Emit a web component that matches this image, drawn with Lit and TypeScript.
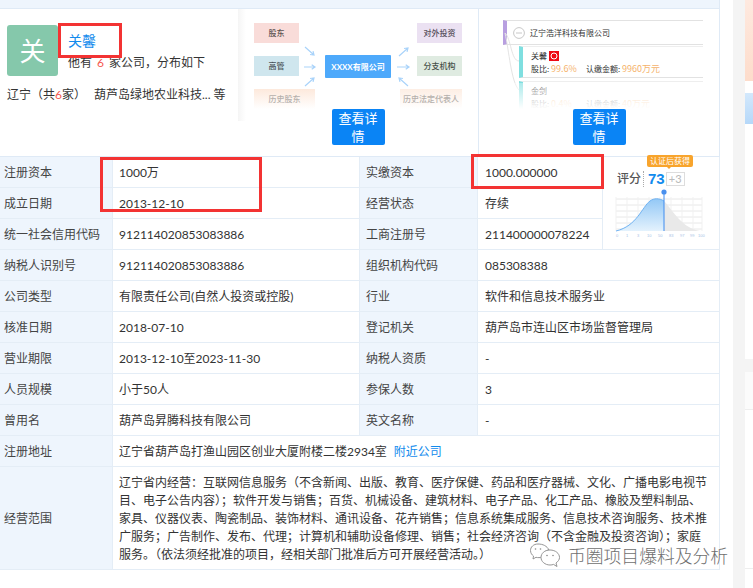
import { LitElement, html, css, svg } from 'lit'
import { customElement } from 'lit/decorators.js'

// diagram nodes are placed from this data, in px inside the 240x100 thumbnail
const nodes = [
	{ label: '股东', x: 16, y: 14, w: 45, h: 20, bg: '#f9dcd9', color: '#5b5250' },
	{ label: '高管', x: 16, y: 47, w: 45, h: 20, bg: '#cfe6ee', color: '#4a5358' },
	{ label: '历史股东', x: 16, y: 80, w: 61, h: 20, bg: 'linear-gradient(#fde9dc, #fff)', color: '#b5b0ac' },
	{ label: 'XXXX有限公司', x: 87, y: 46, w: 66, h: 23, bg: '#4da9fb', color: '#fff' },
	{ label: '对外投资', x: 179, y: 14, w: 45, h: 20, bg: '#ebe1f2', color: '#57505c' },
	{ label: '分支机构', x: 179, y: 47, w: 45, h: 20, bg: '#dfebe1', color: '#465048' },
	{ label: '历史法定代表人', x: 162, y: 80, w: 62, h: 20, bg: 'linear-gradient(#fdeee4, #fff)', color: '#b5b0ac' },
]

// page coordinates, the svg viewBox starts at the thumbnail corner
const arrows = [
	[305, 46, 314, 54],
	[304, 66, 315, 66],
	[305, 85, 314, 77],
	[399, 55, 408, 47],
	[397, 66, 409, 66],
	[408, 85, 399, 77],
]

const rows = [
	['注册资本', '1000万', '实缴资本', '1000.000000'],
	['成立日期', '2013-12-10', '经营状态', '存续'],
	['统一社会信用代码', '912114020853083886', '工商注册号', '211400000078224'],
	['纳税人识别号', '912114020853083886', '组织机构代码', '085308388'],
	['公司类型', '有限责任公司(自然人投资或控股)', '行业', '软件和信息技术服务业'],
	['核准日期', '2018-07-10', '登记机关', '葫芦岛市连山区市场监督管理局'],
	['营业期限', '2013-12-10至2023-11-30', '纳税人资质', '-'],
	['人员规模', '小于50人', '参保人数', '3'],
	['曾用名', '葫芦岛昇腾科技有限公司', '英文名称', '-'],
]

const scope = [
	'辽宁省内经营：互联网信息服务（不含新闻、出版、教育、医疗保健、药品和医疗器械、文化、广播电影电视节',
	'目、电子公告内容）；软件开发与销售；百货、机械设备、建筑材料、电子产品、化工产品、橡胶及塑料制品、',
	'家具、仪器仪表、陶瓷制品、装饰材料、通讯设备、花卉销售；信息系统集成服务、信息技术咨询服务、技术推',
	'广服务；广告制作、发布、代理；计算机和辅助设备修理、销售；社会经济咨询（不含金融及投资咨询）；家庭',
	'服务。（依法须经批准的项目，经相关部门批准后方可开展经营活动。）',
]

@customElement('app-root')
export class AppRoot extends LitElement {
	static styles = css`
		:host {
			display: flex;
			width: 753px;
			height: 588px;
			overflow: hidden;
			position: relative;
			background: #fff;
			color: #333;
			font-family: Lato, 'Noto Sans CJK SC', sans-serif;
			font-size: 12px;
			line-height: 18px;
		}

		.main {
			width: 720px;
			flex: none;
		}

		.band {
			height: 8px;
			background: #eef5fd;
			border-bottom: 1px solid #dfeaf6;
			border-right: 1px solid #dfeaf6;
		}

		.cards {
			display: flex;
			height: 147px;
			border-right: 1px solid #dfeaf6;
		}

		.card {
			display: flex;
			flex-direction: column;
			align-items: center;
			box-sizing: border-box;
		}

		.person {
			width: 238px;
			align-items: stretch;
			padding: 16px 0 0 7px;
			height: 112px;
		}

		.person-head {
			display: flex;
			gap: 10px;
		}

		.avatar {
			width: 51px;
			height: 51px;
			border-radius: 3px;
			background: #85c8ab;
			color: #fff;
			font-size: 26px;
			display: flex;
			align-items: center;
			justify-content: center;
		}

		.person-text {
			padding-top: 6px;
		}

		.name {
			color: #128bed;
			font-size: 14px;
			line-height: 20px;
			margin-bottom: 3px;
		}

		.red {
			color: #f5584f;
		}

		.spaced {
			margin: 0 2px;
		}

		.person-foot {
			margin-top: 10px;
			display: flex;
			gap: 8px;
			white-space: nowrap;
		}

		.graph {
			width: 240px;
			background: linear-gradient(90deg, #f5f5f5, #fff 8px) no-repeat 0 0 / 100% 112px;
		}

		.graph-box {
			position: relative;
			width: 240px;
			height: 100px;
			flex: none;
		}

		.graph-box svg {
			position: absolute;
			inset: 0;
		}

		.node {
			position: absolute;
			display: flex;
			align-items: center;
			justify-content: center;
			font-size: 8px;
			font-weight: 500;
			line-height: 10px;
			white-space: nowrap;
		}

		.hub {
			border-radius: 1px;
			font-weight: 700;
		}

		.btn {
			width: 53px;
			height: 36px;
			flex: none;
			box-sizing: border-box;
			padding: 0 6px;
			background: #0a84f5;
			border-radius: 2px;
			color: #fff;
			font-size: 13px;
			line-height: 18px;
			text-align: center;
		}

		.tree-card {
			width: 241px;
			border-left: 1px solid #dfeaf6;
			padding-top: 11px;
		}

		.tree {
			position: relative;
			width: 200px;
			height: 89px;
			flex: none;
			overflow: hidden;
			margin-left: 24px;
			align-self: flex-start;
			font-size: 8px;
			line-height: 13px;
			color: #333;
			font-family: 'Noto Sans CJK SC', sans-serif;
		}

		.tree-head {
			display: flex;
			align-items: center;
			gap: 5px;
			height: 25px;
			box-sizing: border-box;
			border-left: 4px solid #b89fe0;
			border-top: 1px solid #e2e2e2;
			border-bottom: 1px solid #e2e2e2;
			padding-left: 6px;
		}

		.minus {
			width: 12px;
			height: 12px;
			flex: none;
		}

		.tree-row {
			margin: 1px 0 3px 16px;
			height: 32px;
			box-sizing: border-box;
			border-left: 4px solid #7fdfe0;
			border-top: 1px solid #eee;
			border-bottom: 1px solid #e2e2e2;
			padding: 2px 0 0 8px;
		}

		.tree-line {
			display: flex;
			align-items: center;
			gap: 2px;
		}

		.stat {
			display: grid;
			grid-template-columns: 55px auto;
			justify-content: start;
		}

		.orange {
			color: #f5b36b;
			font-size: 9px;
		}

		.tree-curves {
			position: absolute;
			inset: 0;
		}

		.tree-fade {
			position: absolute;
			left: 0;
			right: 0;
			bottom: 0;
			height: 26px;
			background: linear-gradient(rgba(255, 255, 255, 0.35), #fff);
		}

		.table {
			display: grid;
			grid-template-columns: 113px 247px 118px 125px 117px;
			grid-auto-rows: 31px;
			border-top: 1px solid #dfeaf6;
		}

		.cell {
			display: flex;
			align-items: center;
			box-sizing: border-box;
			border-right: 1px solid #e4edf6;
			border-bottom: 1px solid #e4edf6;
			white-space: nowrap;
		}

		.label {
			background: #eef5fd;
			padding: 1px 0 0 4px;
			color: #444;
		}

		.label.second {
			padding-left: 6px;
		}

		.value {
			padding: 1px 0 0 6px;
		}

		.value.second {
			padding-left: 7px;
		}

		.wide2 {
			grid-column: span 2;
		}

		.wide4 {
			grid-column: span 4;
		}

		.tall {
			height: 103px;
		}

		.nearby {
			color: #128bed;
			margin-left: 7px;
		}

		.score {
			grid-column: 5;
			grid-row: 1 / span 3;
			position: relative;
			display: block;
			padding: 13px 0 0 14px;
		}

		.score-top {
			display: flex;
			align-items: center;
			height: 18px;
			color: #555;
			font-weight: 500;
		}

		.score-sep {
			height: 16px;
			margin: 0 4px 0 2px;
			border-left: 1px dotted #aaa;
		}

		.score-num {
			color: #128bed;
			font-size: 15px;
			font-weight: 700;
			font-family: 'Liberation Sans', sans-serif;
		}

		.score-plus {
			margin-left: 1px;
			width: 17px;
			height: 12px;
			line-height: 12px;
			text-align: center;
			border: 1px solid #ddd;
			color: #bbb;
			font-size: 11px;
		}

		.score-chart {
			display: block;
			margin: -1px 0 0 -7px;
		}

		.tag {
			position: absolute;
			left: 44px;
			top: -2px;
			width: 46px;
			height: 12px;
			background: #f8a42c;
			border-radius: 2px;
			color: #fff;
			font-size: 8px;
			line-height: 12px;
			text-align: center;
			white-space: nowrap;
		}

		.tag::after {
			content: '';
			position: absolute;
			left: 20px;
			bottom: -2px;
			border: 2px solid transparent;
			border-bottom: 0;
			border-top-color: #f8a42c;
		}

		.gutter {
			width: 33px;
			flex: none;
			display: flex;
			padding-left: 13px;
			box-sizing: border-box;
		}

		.track {
			width: 12px;
			flex: none;
			background: #f4f4f4;
		}

		.side {
			flex: 1;
			display: flex;
			flex-direction: column;
		}

		.side-salmon {
			height: 81px;
			background: linear-gradient(#fee9df, #fddccb);
		}

		.side-blue {
			height: 31px;
			margin-top: 12px;
			background: linear-gradient(#d3e8fc, #b5d8f9);
		}

		.side-gap {
			height: 235px;
			flex: none;
		}

		.side-gray {
			height: 13px;
			background: #f4f4f4;
		}

		.side-pale {
			height: 37px;
			background: #fbfbfb;
			border-bottom: 1px solid #eee;
		}

		.side-rest {
			height: 158px;
			border-bottom: 1px solid #eee;
		}

		.mark {
			position: absolute;
			border: 3px solid #f33333;
			box-sizing: border-box;
			pointer-events: none;
		}

		.mark-name {
			left: 58px;
			top: 23px;
			width: 64px;
			height: 35px;
		}

		.mark-capital {
			left: 100px;
			top: 157px;
			width: 162px;
			height: 55px;
		}

		.mark-paid {
			left: 471px;
			top: 154px;
			width: 133px;
			height: 35px;
		}

		.watermark {
			position: absolute;
			left: 530px;
			top: 542px;
			display: flex;
			align-items: center;
			gap: 8px;
			color: #6f6f6f;
			font-size: 17.8px;
			line-height: 26px;
			font-weight: 300;
			white-space: nowrap;
			text-shadow: 0 0 2px #fff, 0 0 2px #fff;
			font-family: 'Noto Sans CJK SC', sans-serif;
		}
	`

	renderGraph() {
		return html`
			<div class="graph-box">
				<svg width="240" height="100" viewBox="238 8 240 100" fill="none" stroke="#a9d3fa" stroke-width="1.2">
					${arrows.map(([x1, y1, x2, y2]) => {
						const a = Math.atan2(y2 - y1, x2 - x1)
						const p1 = `${x2 - 4 * Math.cos(a - 0.6)} ${y2 - 4 * Math.sin(a - 0.6)}`
						const p2 = `${x2 - 4 * Math.cos(a + 0.6)} ${y2 - 4 * Math.sin(a + 0.6)}`
						return svg`<path d="M${x1} ${y1}L${x2} ${y2}M${p1}L${x2} ${y2}L${p2}" />`
					})}
				</svg>
				${nodes.map(
					(n) => html`<div
						class="node ${n.label.startsWith('XXXX') ? 'hub' : ''}"
						style="left:${n.x}px;top:${n.y}px;width:${n.w}px;height:${n.h}px;background:${n.bg};color:${n.color}"
					>
						${n.label}
					</div>`
				)}
			</div>
		`
	}

	renderTree() {
		return html`
			<div class="tree">
				<div class="tree-head">
					<svg class="minus" viewBox="0 0 12 12" fill="none" stroke="#c8c8c8">
						<circle cx="6" cy="6" r="5.4" />
						<path d="M3 6h6" />
					</svg>
					<span>辽宁浩洋科技有限公司</span>
				</div>
				<div class="tree-row">
					<div class="tree-line">
						<span>关馨</span>
						<svg width="10" height="10" viewBox="0 0 10 10">
							<rect width="10" height="10" fill="#ee0a14" />
							<circle cx="5" cy="5" r="3" fill="none" stroke="#fff" stroke-width="1" />
						</svg>
					</div>
					<div class="stat">
						<span>股比: <span class="orange">99.6%</span></span>
						<span>认缴金额: <span class="orange">9960万元</span></span>
					</div>
				</div>
				<div class="tree-row">
					<div class="tree-line">金剑</div>
					<div class="stat">
						<span>股比: <span class="orange">0.4%</span></span>
						<span>认缴金额: <span class="orange">40万元</span></span>
					</div>
				</div>
				<svg class="tree-curves" width="200" height="89" fill="none" stroke="#e4e4e4">
					<path d="M2 13C8 18 8 41 16 41" />
					<path d="M2 13C6 30 8 62 16 70" />
				</svg>
				<div class="tree-fade"></div>
			</div>
		`
	}

	renderScore() {
		const gridY = [199, 205, 211, 217, 223, 229]
		const gridX = [616, 627, 638, 649, 660, 671, 682, 693, 702]
		return html`
			<div class="cell score">
				<div class="tag">认证后获得</div>
				<div class="score-top">
					<span>评分</span>
					<span class="score-sep"></span>
					<span class="score-num">73</span>
					<span class="score-plus">+3</span>
				</div>
				<svg class="score-chart" width="100" height="55" viewBox="610 187 100 55">
					<defs>
						<linearGradient id="fill-left" x1="0" y1="0" x2="0" y2="1">
							<stop offset="0" stop-color="#93c8f6" />
							<stop offset="1" stop-color="#e4f2fd" />
						</linearGradient>
					</defs>
					<g stroke="#e8e8e8" stroke-width="1">
						${gridY.map((y) => svg`<path d="M616 ${y}H702" />`)}
						${gridX.map((x) => svg`<path d="M${x} 197V231" stroke="#f1f1f1" />`)}
					</g>
					<path d="M664 231V201C659 198 654 198 650 201C642 207 637 226 616 231Z" fill="url(#fill-left)" />
					<path d="M664 231V201C674 212 682 228 700 231Z" fill="#e9e9e9" />
					<path d="M616 231C637 226 642 207 650 201C654 198 659 198 664 201" fill="none" stroke="#6fb2f2" />
					<path d="M664 194V231" stroke="#3f8cf0" stroke-width="1" />
					<circle cx="664" cy="192" r="2.6" fill="#4a90ee" />
					<g font-size="4" fill="#a9c3e6" font-family="'Liberation Sans', sans-serif">
						${[
							['0', 616],
							['1', 626],
							['3', 637],
							['10', 647],
							['50', 658],
							['83', 669],
							['97', 680],
							['99', 690],
							['100', 698],
						].map(([t, x]) => svg`<text x=${x} y="237">${t}</text>`)}
					</g>
				</svg>
			</div>
		`
	}

	render() {
		return html`
			<div class="main">
				<div class="band"></div>
				<div class="cards">
					<div class="card person">
						<div class="person-head">
							<div class="avatar">关</div>
							<div class="person-text">
								<div class="name">关馨</div>
								<div>他有 <span class="red spaced">6</span> 家公司，分布如下</div>
							</div>
						</div>
						<div class="person-foot">
							<span>辽宁（共<span class="red">6</span>家）</span>
							<span>葫芦岛绿地农业科技... 等</span>
						</div>
					</div>
					<div class="card graph">
						${this.renderGraph()}
						<div class="btn">查看详情</div>
					</div>
					<div class="card tree-card">
						${this.renderTree()}
						<div class="btn">查看详情</div>
					</div>
				</div>
				<div class="table">
					${rows.map(
						(r, i) => html`
							<div class="cell label">${r[0]}</div>
							<div class="cell value">${r[1]}</div>
							<div class="cell label second">${r[2]}</div>
							<div class="cell value second ${i > 2 ? 'wide2' : ''}">${r[3]}</div>
						`
					)}
					${this.renderScore()}
					<div class="cell label">注册地址</div>
					<div class="cell value wide4">
						辽宁省葫芦岛打渔山园区创业大厦附楼二楼2934室<span class="nearby">附近公司</span>
					</div>
					<div class="cell label tall">经营范围</div>
					<div class="cell value wide4 tall">
						<div>${scope.map((l) => html`<div>${l}</div>`)}</div>
					</div>
				</div>
			</div>
			<div class="gutter">
				<div class="track"></div>
				<div class="side">
					<div class="side-salmon"></div>
					<div class="side-blue"></div>
					<div class="side-gap"></div>
					<div class="side-gray"></div>
					<div class="side-pale"></div>
					<div class="side-rest"></div>
				</div>
			</div>
			<div class="mark mark-name"></div>
			<div class="mark mark-capital"></div>
			<div class="mark mark-paid"></div>
			<div class="watermark">
				<svg width="30" height="25" viewBox="0 0 30 25" fill="#fff" stroke="#8a8a8a" stroke-width="0.9">
					<path d="M8 1C3.5 1 0.5 4 0.5 7.5C0.5 10 2 12 3.5 13L3 16L6 14.3C8 14.8 10 14.8 12 14C13 9 17 7 19 7C17 3 13 1 8 1Z" />
					<path d="M20 7C14.5 7 11 10.5 11 14.5C11 18.5 15 22 20 22C21.5 22 22.5 21.8 23.5 21.4L27 23.5L26 20C28 18.5 29.5 16.7 29.5 14.5C29.5 10.5 25.5 7 20 7Z" />
					<circle cx="5.5" cy="6" r="0.8" fill="#8a8a8a" stroke="none" />
					<circle cx="10.5" cy="6" r="0.8" fill="#8a8a8a" stroke="none" />
					<circle cx="17" cy="12.5" r="0.8" fill="#8a8a8a" stroke="none" />
					<circle cx="23" cy="12.5" r="0.8" fill="#8a8a8a" stroke="none" />
				</svg>
				<span>币圈项目爆料及分析</span>
			</div>
		`
	}
}
